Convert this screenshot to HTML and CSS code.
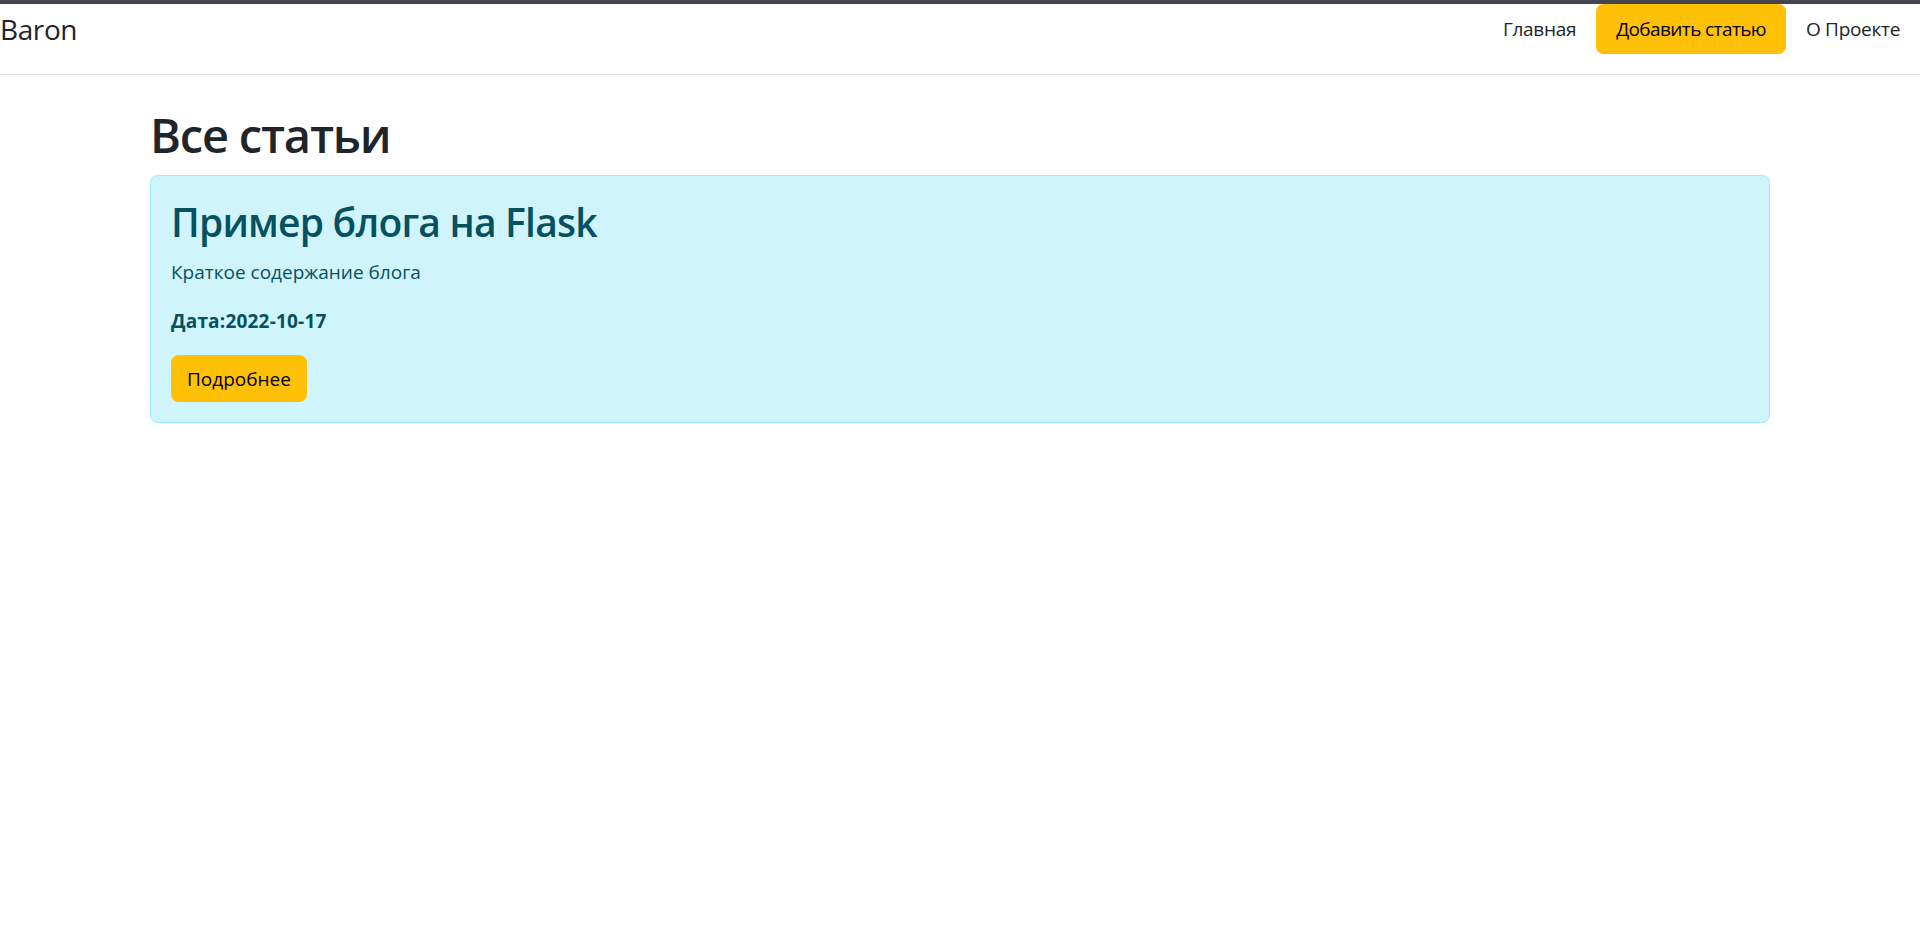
FILE: index.html
```html
<!DOCTYPE html>
<html lang="ru">
<head>
<meta charset="utf-8">
<title>Baron</title>
<link rel="stylesheet" href="styles.css">
</head>
<body>
<div class="topbar"></div>
<header class="site-header">
  <a class="brand" href="#"><span class="brand-text">Baron</span></a>
  <nav class="nav">
    <a class="nav-link" href="#">Главная</a>
    <a class="nav-link active" href="#">Добавить статью</a>
    <a class="nav-link" href="#">О Проекте</a>
  </nav>
</header>
<main class="container">
  <h1 class="page-title">Все статьи</h1>
  <div class="alert">
    <h2 class="alert-heading">Пример блога на Flask</h2>
    <p class="alert-text">Краткое содержание блога</p>
    <p class="alert-text alert-date"><b>Дата:2022-10-17</b></p>
    <a class="btn-warning" href="#">Подробнее</a>
  </div>
</main>
</body>
</html>
```

FILE: styles.css
```css
* { box-sizing: border-box; }
html, body { margin: 0; padding: 0; }
body {
  font-family: "Open Sans", "Noto Sans", sans-serif;
  font-size: 19px;
  line-height: 1.5;
  color: #212529;
  background: #fff;
}
a { text-decoration: none; }
.topbar { height: 4px; background: #45454d; }
.site-header {
  display: flex;
  justify-content: space-between;
  align-items: flex-start;
  height: 71px;
  padding-bottom: 20px;
  border-bottom: 1px solid #dee2e6;
}
.brand {
  display: flex;
  align-items: center;
  height: 50px;
  color: #212529;
}
.brand-text { font-size: 28px; line-height: 45px; letter-spacing: -0.4px; }
.nav { display: flex; }
.nav-link {
  display: block;
  padding: 10px 20px;
  font-size: 19px;
  line-height: 30px;
  color: #212529;
  border-radius: 7.5px;
  letter-spacing: -0.3px;
}
.nav-link.active { background: #ffc107; color: #000; letter-spacing: -0.6px; }
.container {
  max-width: 1650px;
  margin: 0 auto;
  padding: 30px 15px 0;
}
.page-title {
  margin: 0 0 10px;
  font-size: 47px;
  font-weight: 600;
  line-height: 60px;
  letter-spacing: -1.2px;
}
.alert {
  background: #cff4fc;
  border: 1px solid #9eeaf9;
  border-radius: 7.5px;
  color: #055160;
  padding: 22px 20px 20px;
}
.alert-heading {
  margin: 0 0 11px;
  font-size: 39px;
  font-weight: 600;
  line-height: 48px;
  letter-spacing: -0.8px;
}
.alert-text { margin: 0 0 19px; line-height: 30px; }
.alert-date { letter-spacing: 0.2px; }
.alert-text b { font-weight: 700; }
.btn-warning {
  display: inline-block;
  padding: 7.5px 15px;
  border: 1px solid #ffc107;
  background: #ffc107;
  color: #000;
  border-radius: 7.5px;
  line-height: 30px;
}
```
